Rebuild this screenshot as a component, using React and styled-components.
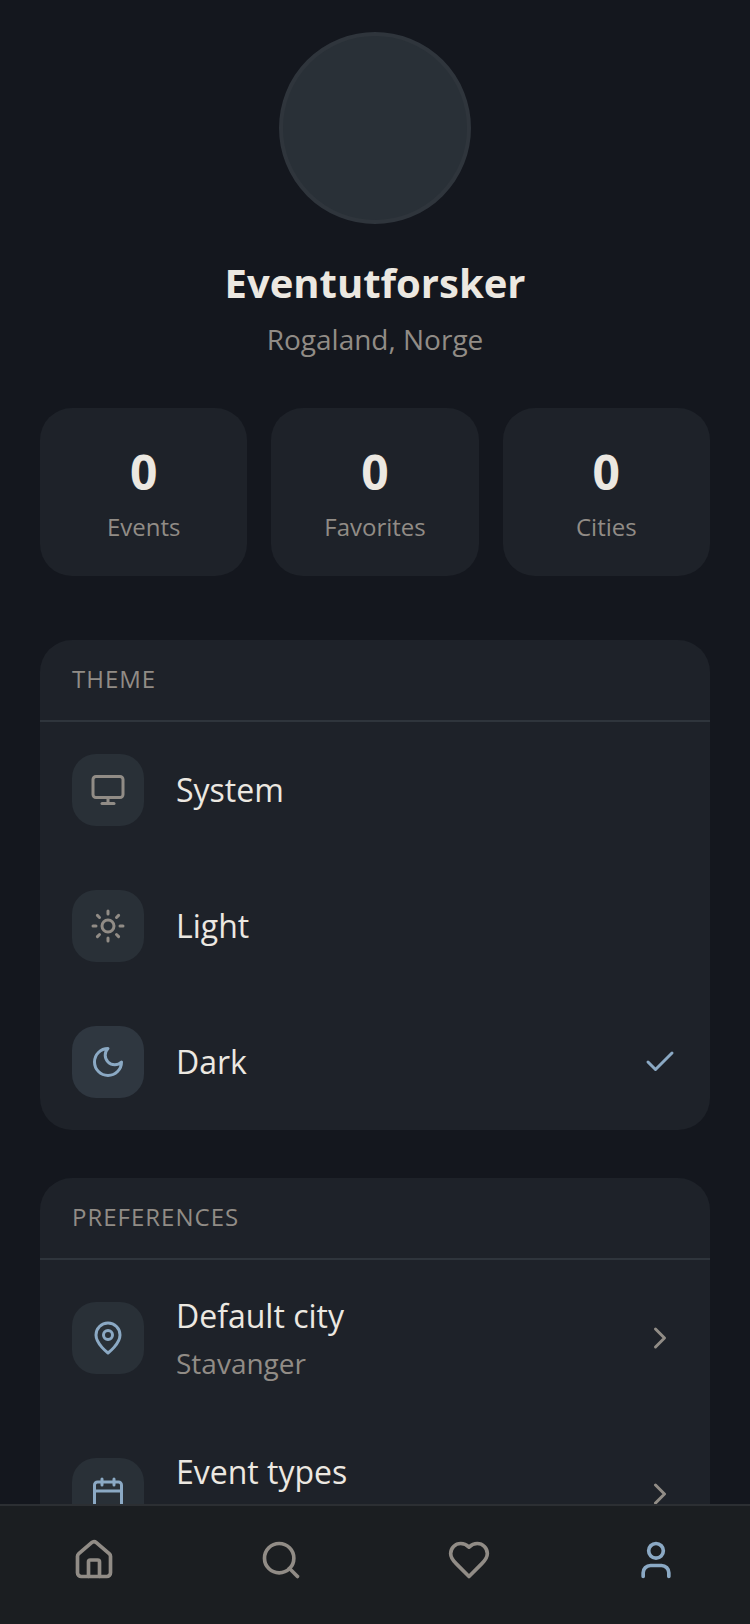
import { useState } from 'react';
import styled, { createGlobalStyle } from 'styled-components';
import { Calendar, Check, ChevronRight, House, Monitor, Search, Sun, User } from 'lucide-react';

const GlobalStyle = createGlobalStyle`
  :root {
    --color-bg: #14171e;
    --color-card: #1e2229;
    --color-tile: #293037;
    --color-tile-active: #2f3740;
    --color-line: #2f353c;
    --color-nav: #1b1e21;
    --color-nav-line: #2c2f33;
    --color-text: #ece8e1;
    --color-muted: #918c86;
    --color-accent: #8ba9c4;
  }

  * {
    box-sizing: border-box;
    margin: 0;
    padding: 0;
  }

  body {
    background-color: var(--color-bg);
    color: var(--color-text);
    font-family: 'Open Sans', 'Noto Sans', sans-serif;
  }

  button {
    border: none;
    background: none;
    color: inherit;
    font: inherit;
    text-align: left;
    cursor: pointer;
  }
`;

const Screen = styled.div`
  height: 100vh;
  display: flex;
  flex-direction: column;
`;
const Content = styled.main`
  flex: 1;
  min-height: 0;
  overflow-y: auto;
  scrollbar-width: none;
  padding: 32px 40px 48px;
`;
const Profile = styled.header`
  display: flex;
  flex-direction: column;
  align-items: center;
`;
const Avatar = styled.div`
  width: 192px;
  height: 192px;
  margin-bottom: 32px;
  border: 4px solid var(--color-line);
  border-radius: 50%;
  background-color: var(--color-tile);
`;
const Name = styled.h1`
  margin-bottom: 8px;
  font-size: 40px;
  font-weight: 700;
  line-height: 54px;
`;
const Location = styled.p`
  color: var(--color-muted);
  font-size: 28px;
  line-height: 42px;
`;
const Stats = styled.div`
  display: grid;
  grid-template-columns: repeat(3, 1fr);
  gap: 24px;
  margin: 48px 0 64px;
`;
const Stat = styled.div`
  display: flex;
  flex-direction: column;
  align-items: center;
  gap: 8px;
  padding: 32px 32px 34px;
  border-radius: 32px;
  background-color: var(--color-card);
`;
const StatValue = styled.div`
  font-size: 48px;
  font-weight: 700;
  line-height: 64px;
`;
const StatLabel = styled.div`
  color: var(--color-muted);
  font-size: 24px;
  line-height: 30px;
`;
const Card = styled.section`
  overflow: hidden;
  border-radius: 32px;
  background-color: var(--color-card);

  & + & {
    margin-top: 48px;
  }
`;
const CardTitle = styled.h2`
  padding: 24px 32px 26px;
  border-bottom: 2px solid var(--color-line);
  color: var(--color-muted);
  font-size: 24px;
  font-weight: 400;
  letter-spacing: 1px;
  line-height: 30px;
  text-transform: uppercase;
`;
const Row = styled.button`
  display: flex;
  align-items: center;
  gap: 32px;
  width: 100%;
  padding: 32px;
`;
const IconTile = styled.span`
  display: flex;
  align-items: center;
  justify-content: center;
  width: 72px;
  height: 72px;
  border-radius: 24px;
  background-color: ${(props) =>
    props.$active ? 'var(--color-tile-active)' : 'var(--color-tile)'};
  color: ${(props) => (props.$accent ? 'var(--color-accent)' : 'var(--color-muted)')};
`;
const RowText = styled.span`
  flex: 1;
  display: flex;
  flex-direction: column;
  gap: 4px;
  min-height: ${(props) => (props.$twoLine ? '92px' : '0')};
`;
const RowTitle = styled.span`
  font-size: 32px;
  line-height: 48px;
`;
const RowValue = styled.span`
  color: var(--color-muted);
  font-size: 28px;
  line-height: 38px;
`;
const RowEnd = styled.span`
  display: flex;
  color: ${(props) => (props.$accent ? 'var(--color-accent)' : 'var(--color-muted)')};
`;
const Nav = styled.nav`
  display: grid;
  grid-template-columns: repeat(4, 1fr);
  padding: 16px 0 26px;
  border-top: 2px solid var(--color-nav-line);
  background-color: var(--color-nav);
`;
const NavLink = styled.a`
  display: flex;
  justify-content: center;
  padding: 16px;
  color: ${(props) => (props.$active ? 'var(--color-accent)' : 'var(--color-muted)')};
`;
const OutlineSvg = styled.svg`
  fill: none;
  stroke: currentColor;
  stroke-width: 2;
  stroke-linecap: round;
  stroke-linejoin: round;
`;

function Moon({ size }) {
  return (
    <OutlineSvg width={size} height={size} viewBox="0 0 24 24" aria-hidden="true">
      <path d="M12 3a6 6 0 0 0 9 9 9 9 0 1 1-9-9Z" />
    </OutlineSvg>
  );
}

function MapPin({ size }) {
  return (
    <OutlineSvg width={size} height={size} viewBox="0 0 24 24" aria-hidden="true">
      <path d="M20 10c0 6-8 12-8 12s-8-6-8-12a8 8 0 0 1 16 0Z" />
      <circle cx="12" cy="10" r="3" />
    </OutlineSvg>
  );
}

function Heart({ size }) {
  return (
    <OutlineSvg width={size} height={size} viewBox="0 0 24 24" aria-hidden="true">
      <path d="M19 14c1.49-1.46 3-3.21 3-5.5A5.5 5.5 0 0 0 16.5 3c-1.76 0-3 .5-4.5 2-1.5-1.5-2.74-2-4.5-2A5.5 5.5 0 0 0 2 8.5c0 2.3 1.5 4.05 3 5.5l7 7Z" />
    </OutlineSvg>
  );
}

const stats = [
  { label: 'Events', value: 0 },
  { label: 'Favorites', value: 0 },
  { label: 'Cities', value: 0 },
];

const themes = [
  { label: 'System', icon: Monitor },
  { label: 'Light', icon: Sun },
  { label: 'Dark', icon: Moon },
];

const preferences = [
  { label: 'Default city', value: 'Stavanger', icon: MapPin },
  { label: 'Event types', icon: Calendar },
];

const tabs = [
  { id: 'home', icon: House },
  { id: 'search', icon: Search },
  { id: 'favorites', icon: Heart },
  { id: 'profile', icon: User },
];

function ThemeCard() {
  const [theme, setTheme] = useState('Dark');

  return (
    <Card>
      <CardTitle>Theme</CardTitle>
      {themes.map(({ label, icon: Icon }) => {
        const isActive = theme === label;
        return (
          <Row key={label} type="button" aria-pressed={isActive} onClick={() => setTheme(label)}>
            <IconTile $active={isActive} $accent={isActive}>
              <Icon size={36} />
            </IconTile>
            <RowText>
              <RowTitle>{label}</RowTitle>
            </RowText>
            {isActive && (
              <RowEnd $accent>
                <Check size={36} />
              </RowEnd>
            )}
          </Row>
        );
      })}
    </Card>
  );
}

function PreferencesCard() {
  return (
    <Card>
      <CardTitle>Preferences</CardTitle>
      {preferences.map(({ label, value, icon: Icon }) => (
        <Row key={label} type="button">
          <IconTile $accent>
            <Icon size={36} />
          </IconTile>
          <RowText $twoLine>
            <RowTitle>{label}</RowTitle>
            {value && <RowValue>{value}</RowValue>}
          </RowText>
          <RowEnd>
            <ChevronRight size={36} />
          </RowEnd>
        </Row>
      ))}
    </Card>
  );
}

function App() {
  return (
    <>
      <GlobalStyle />
      <Screen>
        <Content>
          <Profile>
            <Avatar />
            <Name>Eventutforsker</Name>
            <Location>Rogaland, Norge</Location>
          </Profile>
          <Stats>
            {stats.map((stat) => (
              <Stat key={stat.label}>
                <StatValue>{stat.value}</StatValue>
                <StatLabel>{stat.label}</StatLabel>
              </Stat>
            ))}
          </Stats>
          <ThemeCard />
          <PreferencesCard />
        </Content>
        <Nav>
          {tabs.map(({ id, icon: Icon }) => (
            <NavLink key={id} href={`#${id}`} aria-label={id} $active={id === 'profile'}>
              <Icon size={44} />
            </NavLink>
          ))}
        </Nav>
      </Screen>
    </>
  );
}

export default App;
